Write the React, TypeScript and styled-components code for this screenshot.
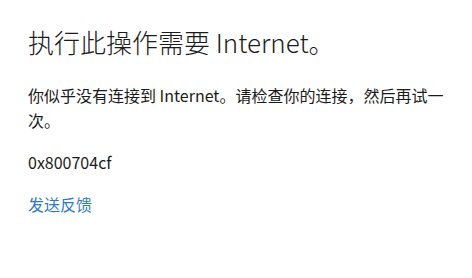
import styled, { createGlobalStyle } from 'styled-components';

const Global = createGlobalStyle`
    html, body {
        margin: 0;
        padding: 0;
        background: #ffffff;
    }
    body {
        font-family: "Noto Sans CJK SC", "Open Sans", sans-serif;
    }
`

const Page = styled.div`
    width: 472px;
    height: 278px;
    box-sizing: border-box;
    padding: 22px 20px 0 28px;
    display: flex;
    flex-flow: column nowrap;
    align-items: flex-start;
    color: #1b1b1b;
`

const Title = styled.h1`
    margin: 0;
    font-size: 26px;
    font-weight: 300;
    line-height: 40px;
    letter-spacing: 0;
`

const Message = styled.p`
    margin: 21px 0 0;
    font-size: 16px;
    font-weight: 400;
    line-height: 25px;
`

const Code = styled.p`
    margin: 17px 0 0;
    font-size: 16px;
    line-height: 25px;
`

const Link = styled.a`
    margin-top: 17px;
    font-size: 16px;
    line-height: 25px;
    color: #2f7bc3;
    text-decoration: none;
    cursor: pointer;
`

export default function App() {
    return (
        <Page>
            <Global />
            <Title>执行此操作需要 Internet。</Title>
            <Message>你似乎没有连接到 Internet。请检查你的连接，然后再试一次。</Message>
            <Code>0x800704cf</Code>
            <Link>发送反馈</Link>
        </Page>
    )
}
